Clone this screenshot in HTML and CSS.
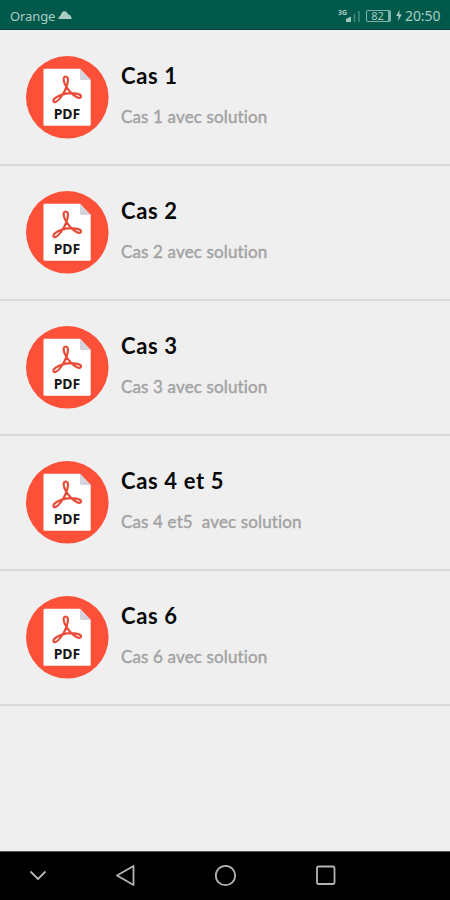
FILE: index.html
```
<!DOCTYPE html>
<html lang="fr">
<head>
<meta charset="utf-8">
<title>Cas avec solution</title>
<link rel="stylesheet" href="styles.css">
</head>
<body>
<svg width="0" height="0" class="defs" aria-hidden="true">
  <symbol id="pdf" viewBox="0 0 84 84">
    <circle cx="42.3" cy="42.3" r="41.3" fill="#fd5039"/>
    <path d="M18.500 15q0-1.300 1.300-1.300H55L65.700 25V69.400q0 1.300-1.300 1.300H19.800q-1.300 0-1.300-1.300z" fill="#fff"/>
    <path d="M55 13.700V23.500q0 1.500 1.500 1.500H65.700z" fill="#d5d4dc"/>
    <g fill="none" stroke="#e84b37" stroke-width="2.200" stroke-linejoin="round">
      <path d="M41.500 32C38.500 27.500 37.300 21.500 40.700 21.500S43 27.500 41.500 32Q39.500 37.500 35.500 42.500C32 47.800 28.300 48.300 28.400 45.800C28.500 43.300 33 41 37 39.600Q43.500 37.800 49 38.300C54.500 38.700 57 40.500 55.700 42.300C54 44 49.500 41.500 46 37.800Q43 34.500 41.500 32Z"/>
    </g>
  </symbol>
</svg>
<header class="status">
  <span class="carrier">Orange</span>
  <svg class="cloud" width="14" height="10" viewBox="0 0 14 10"><path d="M.3 9Q0 7 2.500 5.500C3.500 2 5 .8 7 1.200C9 1.500 9.500 3 10 4.200C12 4.500 13.800 6.500 13.700 9z" fill="#a9cdc3"/></svg>
  <div class="signal"><span>3G</span><svg width="17" height="14" viewBox="0 0 17 14"><path d="M0 13V10L5 7.500V13z" fill="#9cc7bc"/><path d="M8.500 13V5M13 13V2" stroke="#3f8878" stroke-width="1.700"/></svg></div>
  <div class="battery">82</div>
  <svg class="bolt" width="6" height="11" viewBox="0 0 6 11"><path d="M3.500 0L.3 6H2.600L2 11L5.800 4.500H3.300z" fill="#b4d2ca"/></svg>
  <span class="time">20:50</span>
</header>
<main class="list">
  <article class="row"><div class="icon"><svg width="84" height="84"><use href="#pdf"/></svg><b>PDF</b></div><div class="text"><h2>Cas 1</h2><p>Cas 1 avec solution</p></div></article>
  <article class="row"><div class="icon"><svg width="84" height="84"><use href="#pdf"/></svg><b>PDF</b></div><div class="text"><h2>Cas 2</h2><p>Cas 2 avec solution</p></div></article>
  <article class="row"><div class="icon"><svg width="84" height="84"><use href="#pdf"/></svg><b>PDF</b></div><div class="text"><h2>Cas 3</h2><p>Cas 3 avec solution</p></div></article>
  <article class="row"><div class="icon"><svg width="84" height="84"><use href="#pdf"/></svg><b>PDF</b></div><div class="text"><h2>Cas 4 et 5</h2><p>Cas 4 et5  avec solution</p></div></article>
  <article class="row"><div class="icon"><svg width="84" height="84"><use href="#pdf"/></svg><b>PDF</b></div><div class="text"><h2>Cas 6</h2><p>Cas 6 avec solution</p></div></article>
</main>
<nav class="nav">
  <svg width="24" height="24" viewBox="0 0 24 24"><path d="M5.500 7.500L13 15L20.500 7.500"/></svg>
  <svg width="24" height="24" viewBox="0 0 24 24"><path d="M20.500 2V21L4 11.500z"/></svg>
  <svg width="24" height="24" viewBox="0 0 24 24"><circle cx="12.500" cy="11.500" r="9.700"/></svg>
  <svg width="24" height="24" viewBox="0 0 24 24"><rect x="4" y="2.500" width="17.500" height="17.500" rx="1.500"/></svg>
</nav>
</body>
</html>
```
FILE: styles.css
```
* { box-sizing: border-box; }
body {
  margin: 0;
  height: 900px;
  display: flex;
  flex-direction: column;
  overflow: hidden;
  background: #efefef;
  font-family: Lato, "Noto Sans", sans-serif;
}
.defs { position: absolute; }
.status {
  height: 30px;
  flex: none;
  display: flex;
  align-items: center;
  padding: 2px 9px 0 10px;
  background: #00594b;
  border-bottom: 1px solid #064537;
  color: #a9cdc3;
  font: 13px/20px "Noto Sans", sans-serif;
}
.carrier { width: 48px; letter-spacing: -0.1px; white-space: nowrap; }
.cloud { margin-top: -1px; }
.signal { display: flex; margin-left: auto; width: 28px; align-items: center; }
.signal span { font-size: 7px; font-weight: 700; line-height: 8px; margin-top: -6px; width: 8px; }
.battery {
  width: 25px;
  height: 12px;
  border: 1px solid #7fb3a7;
  border-right-width: 3px;
  border-radius: 2px;
  font-size: 11px;
  line-height: 10px;
  text-align: center;
}
.bolt { margin: 0 3px 0 5px; }
.time { width: 36px; font-size: 14px; white-space: nowrap; letter-spacing: -0.1px; }
.list { flex: 1; padding-top: 1px; }
.row {
  height: 135px;
  display: flex;
  padding: 24px 0 0 25px;
  border-bottom: 2px solid #dadada;
}
.icon { position: relative; width: 84px; height: 84px; }
.icon b {
  position: absolute;
  left: 0;
  top: 51px;
  width: 84px;
  text-align: center;
  font: 700 14px/16px "Noto Sans", sans-serif;
  color: #171717;
}
.text { margin-left: 12px; font-variant-ligatures: none; }
h2 {
  margin: 7px 0 0;
  font-size: 22px;
  line-height: 28px;
  font-weight: 700;
  letter-spacing: 0.65px;
  color: #080808;
}
p {
  margin: 16px 0 0;
  font-size: 17px;
  line-height: 22px;
  letter-spacing: 0.14px;
  color: #a2a2a2;
  -webkit-text-stroke: 0.4px #a2a2a2;
  white-space: pre;
}
.nav {
  height: 49px;
  flex: none;
  display: flex;
  align-items: center;
  padding-left: 25px;
  background: #000;
  border-top: 1px solid #555;
}
.nav svg { fill: none; stroke: #b5b5b5; stroke-width: 1.8; stroke-linejoin: round; }
.nav svg + svg { margin-left: 76px; }
.nav svg:nth-child(2) { margin-left: 64px; }
```
